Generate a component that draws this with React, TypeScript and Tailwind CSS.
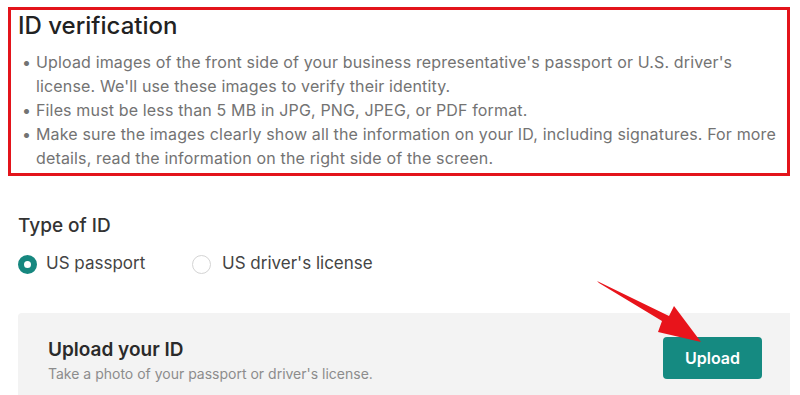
export default function App() {
  return (
    <div
      className="relative w-[800px] h-[395px] overflow-hidden bg-white"
      style={{ fontFamily: "Inter, 'Liberation Sans', sans-serif" }}
    >
      {/* ID verification block (highlighted) */}
      <div className="ml-2 mr-[10px] mt-[7px] h-[169px] border-[3px] border-[#e3141b] px-[7px]">
        <h2 className="text-[24px] leading-[32px] font-medium text-[#222]">ID verification</h2>
        <ul className="mt-2 text-[16px] leading-[24px] tracking-[0.15px] text-[#737373]">
          <li className="flex">
            <span className="w-[18px] shrink-0 pl-[4px]">•</span>
            <span>
              Upload images of the front side of your business representative's passport or U.S. driver's
              license. We'll use these images to verify their identity.
            </span>
          </li>
          <li className="flex">
            <span className="w-[18px] shrink-0 pl-[4px]">•</span>
            <span>Files must be less than 5 MB in JPG, PNG, JPEG, or PDF format.</span>
          </li>
          <li className="flex">
            <span className="w-[18px] shrink-0 pl-[4px]">•</span>
            <span>
              Make sure the images clearly show all the information on your ID, including signatures. For more
              details, read the information on the right side of the screen.
            </span>
          </li>
        </ul>
      </div>

      {/* Type of ID */}
      <div className="pl-[18px] pt-[37px]">
        <p className="text-[19px] leading-[26px] font-medium text-[#333]">Type of ID</p>
        <div className="mt-[12px] flex items-center h-[26px]">
          <label className="flex items-center gap-[9px] w-[174px]">
            <span className="w-[19px] h-[19px] rounded-full border-[6px] border-[#16877f] bg-white" />
            <span className="text-[17px] text-[#444]">US passport</span>
          </label>
          <label className="flex items-center gap-[11px]">
            <span className="w-[19px] h-[19px] rounded-full border-[1.5px] border-[#d4d4d4] bg-white" />
            <span className="text-[17px] text-[#444]">US driver's license</span>
          </label>
        </div>
      </div>

      {/* Upload card */}
      <div className="ml-[18px] mr-[10px] mt-[36px] h-[100px] bg-[#f3f3f3] rounded-tl-[4px] pl-[30px] pr-[28px] pt-[24px] flex items-start justify-between">
        <div>
          <p className="text-[19px] leading-[26px] font-semibold text-[#2a2a2a]">Upload your ID</p>
          <p className="mt-[1px] text-[14px] leading-[20px] text-[#8c8c8c]">Take a photo of your passport or driver's license.</p>
        </div>
        <button className="mt-[0px] w-[99px] h-[42px] rounded-[4px] bg-[#158a81] text-white text-[16px] font-semibold">
          Upload
        </button>
      </div>

      {/* Annotation arrow */}
      <svg className="absolute left-0 top-0 pointer-events-none" width="800" height="395">
        <polygon points="597,281 599,283 662,321 658,332 701,342 674,306 669,316" fill="#e8141b" />
      </svg>
    </div>
  );
}
